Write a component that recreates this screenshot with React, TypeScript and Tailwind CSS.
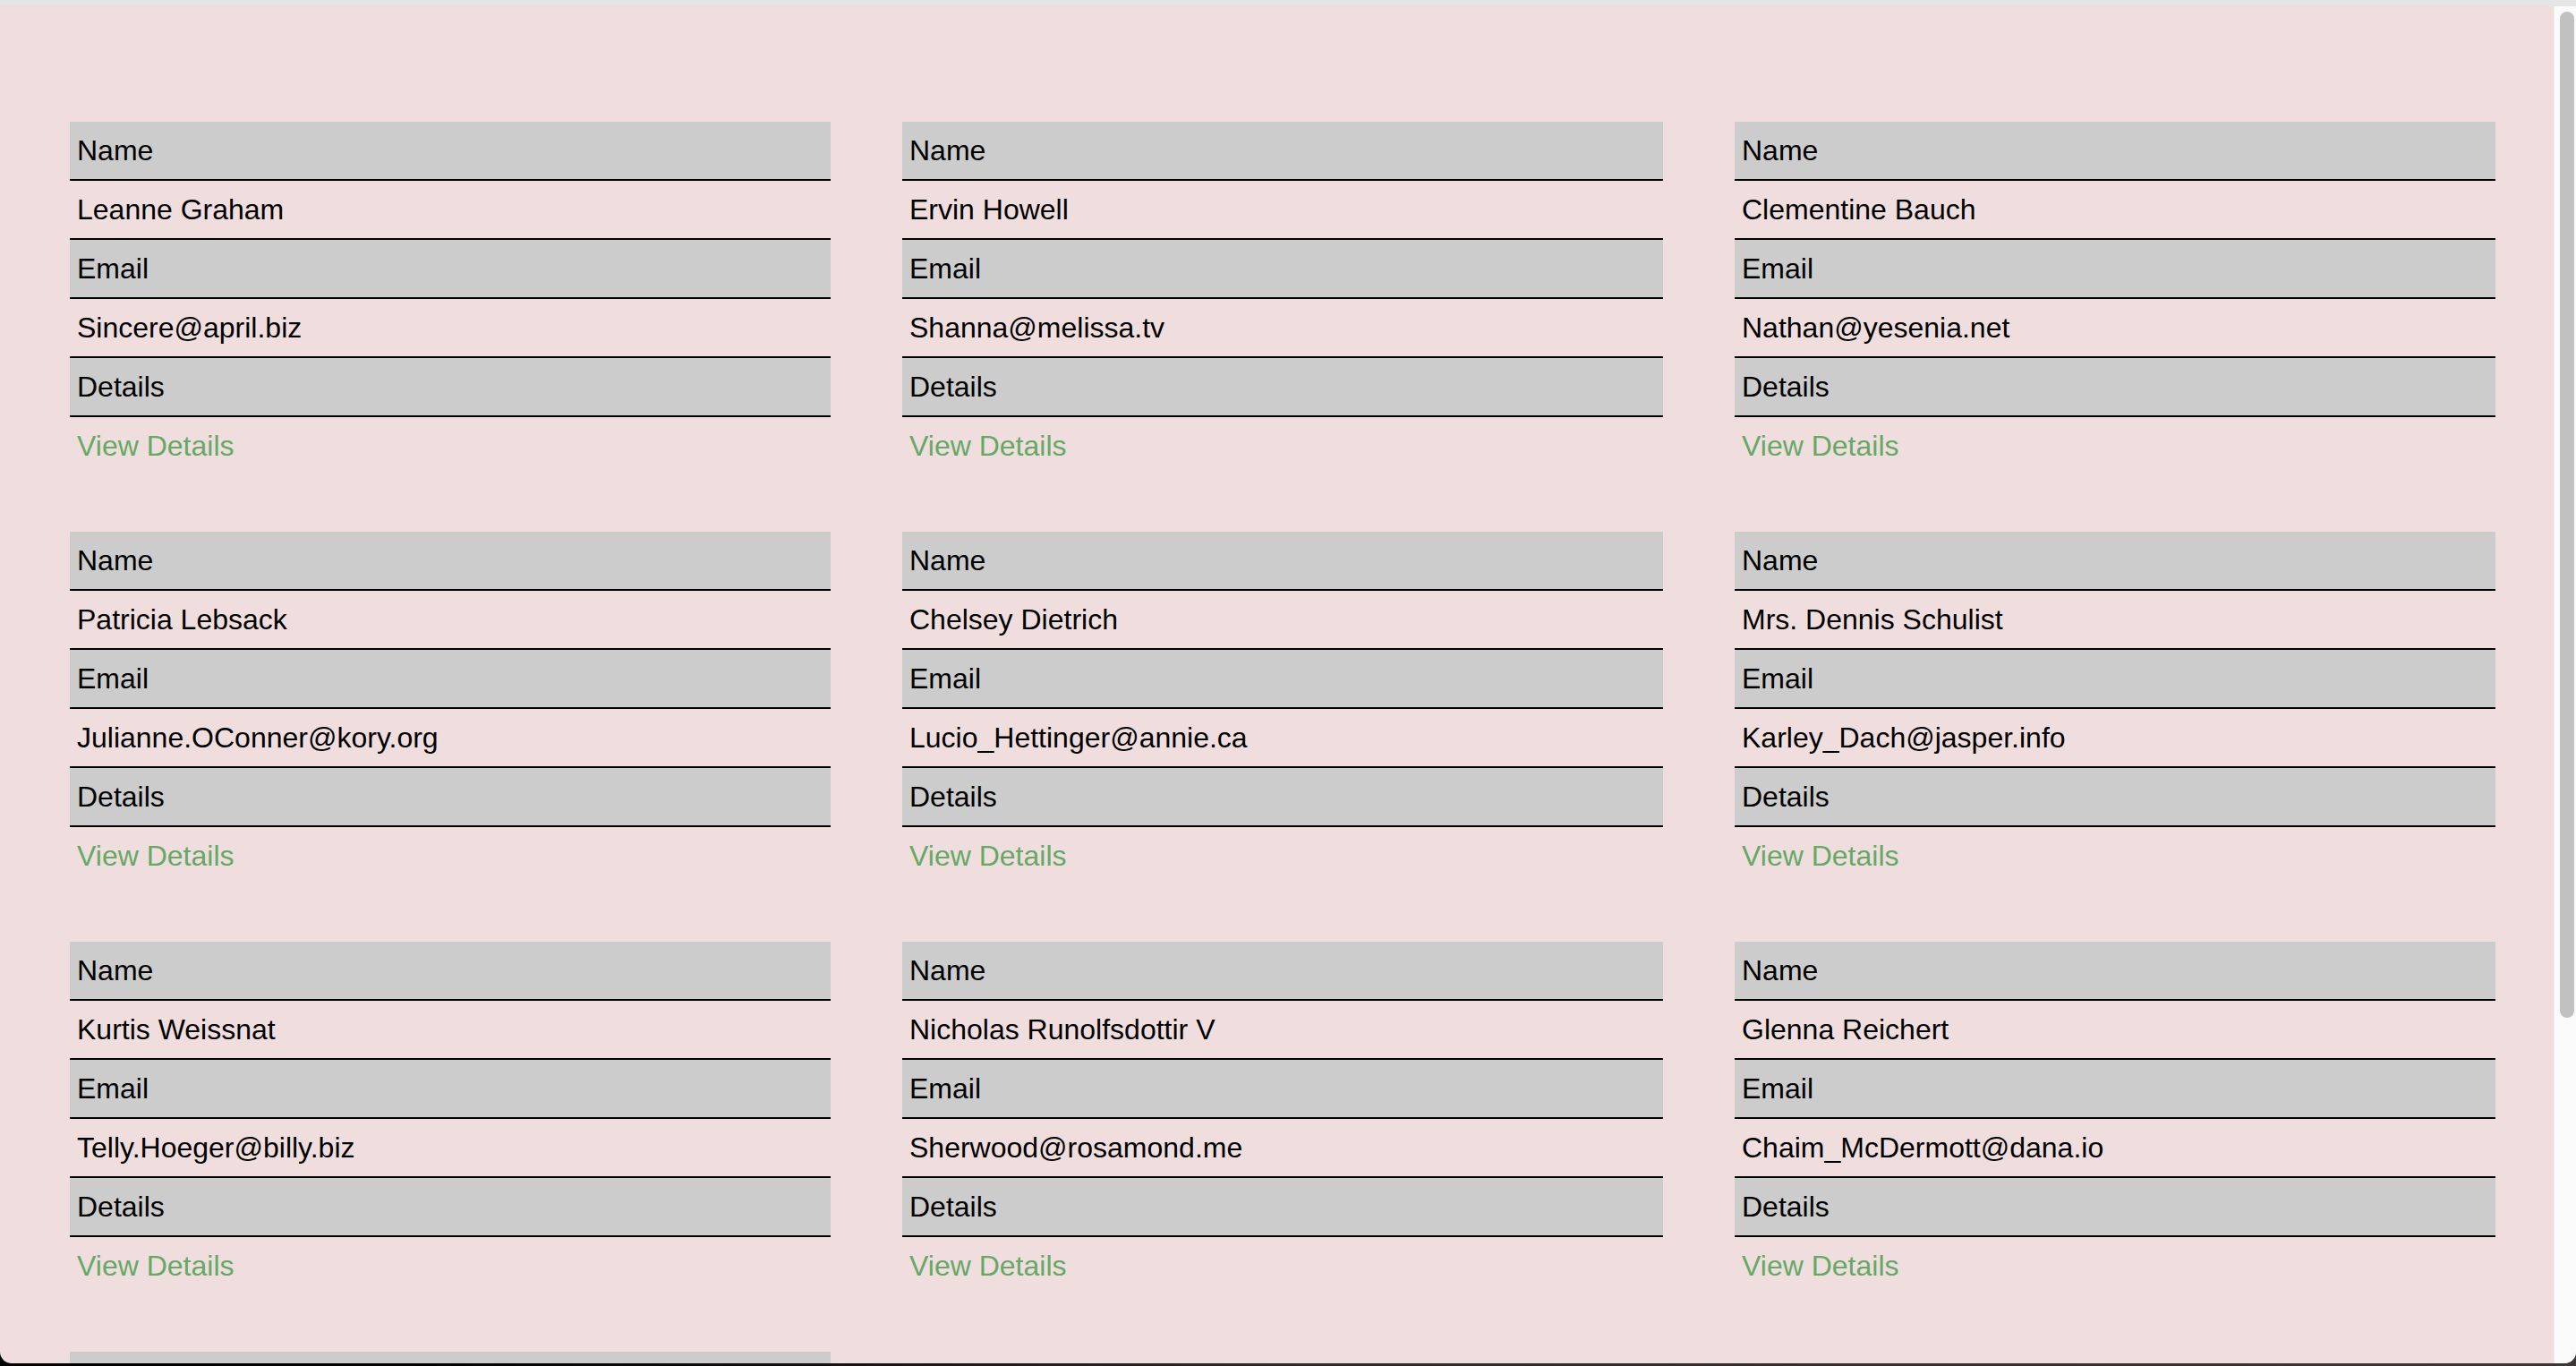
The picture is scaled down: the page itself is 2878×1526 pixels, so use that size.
import React from "react";

type User = { name: string; email: string };

const users: User[] = [
	{ name: "Leanne Graham", email: "Sincere@april.biz" },
	{ name: "Ervin Howell", email: "Shanna@melissa.tv" },
	{ name: "Clementine Bauch", email: "Nathan@yesenia.net" },
	{ name: "Patricia Lebsack", email: "Julianne.OConner@kory.org" },
	{ name: "Chelsey Dietrich", email: "Lucio_Hettinger@annie.ca" },
	{ name: "Mrs. Dennis Schulist", email: "Karley_Dach@jasper.info" },
	{ name: "Kurtis Weissnat", email: "Telly.Hoeger@billy.biz" },
	{ name: "Nicholas Runolfsdottir V", email: "Sherwood@rosamond.me" },
	{ name: "Glenna Reichert", email: "Chaim_McDermott@dana.io" },
	{ name: "Clementina DuBuque", email: "Rey.Padberg@karina.biz" },
];

function HeadRow({ children }: { children: React.ReactNode }) {
	return (
		<div className="h-[66px] flex items-center px-[8px] bg-[#cccccc] border-b-2 border-black">
			{children}
		</div>
	);
}

function CellRow({ children }: { children: React.ReactNode }) {
	return (
		<div className="h-[66px] flex items-center px-[8px] border-b-2 border-black">
			{children}
		</div>
	);
}

function UserCard({ user }: { user: User }) {
	return (
		<div className="w-[850px] flex flex-col">
			<HeadRow>Name</HeadRow>
			<CellRow>{user.name}</CellRow>
			<HeadRow>Email</HeadRow>
			<CellRow>{user.email}</CellRow>
			<HeadRow>Details</HeadRow>
			<div className="h-[64px] flex items-center px-[8px]">
				<a href="#" className="text-[#66a866]">
					View Details
				</a>
			</div>
		</div>
	);
}

export default function App() {
	return (
		<div className="w-[2878px] h-[1526px] overflow-hidden bg-linear-to-r from-black via-[#2e2b2b] to-[#3b3737]">
			<div className="h-[1523px] rounded-b-[13px] overflow-hidden flex flex-col bg-[#f0dede]">
				<div className="h-[7px] bg-[#e5e5e5] shrink-0" />
				<div className="flex-1 flex min-h-0">
					<main
						className="flex-1 overflow-hidden pt-[129px] pl-[78px] text-black text-[32px] leading-none"
						style={{ fontFamily: '"Liberation Sans", Arial, sans-serif' }}
					>
						<div className="grid grid-cols-[repeat(3,850px)] gap-x-[80px] gap-y-[64px]">
							{users.map((u) => (
								<UserCard key={u.email} user={u} />
							))}
						</div>
					</main>
					<div className="w-[25px] shrink-0 bg-[#fafafa] border-l border-[#ececec] pt-[6px] pl-[6px] pr-[2px]">
						<div className="h-[1124px] rounded-full bg-[#c1c1c1]" />
					</div>
				</div>
			</div>
		</div>
	);
}
